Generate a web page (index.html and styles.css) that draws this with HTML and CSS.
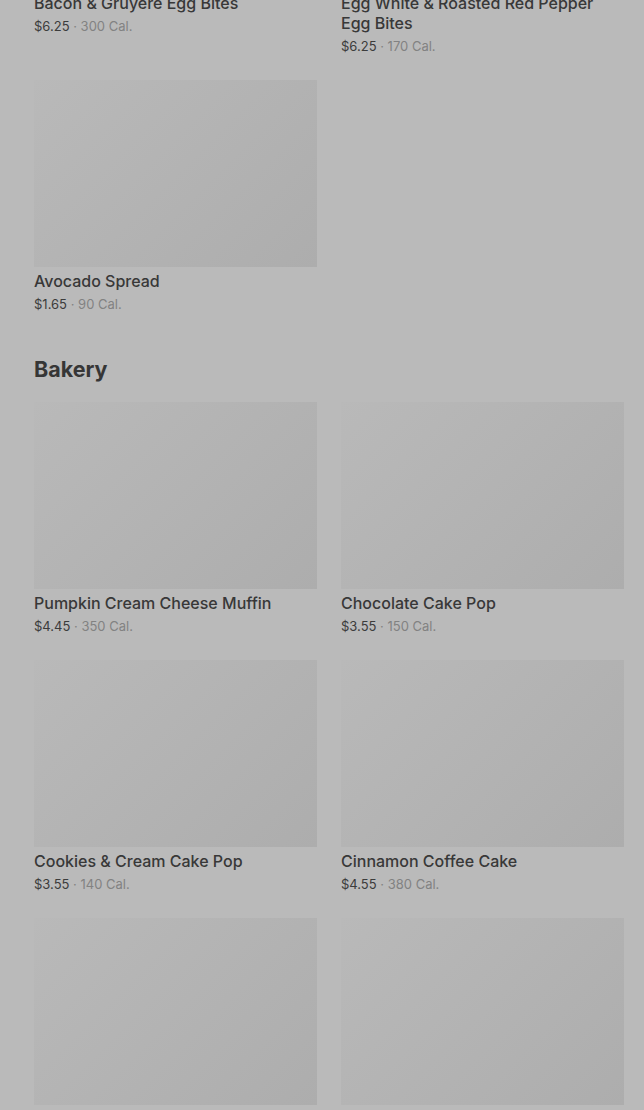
FILE: index.html
```html
<!DOCTYPE html>
<html lang="en">
<head>
  <meta charset="UTF-8">
  <meta name="viewport" content="width=device-width, initial-scale=1">
  <title>Menu</title>
  <link rel="stylesheet" href="styles.css">
</head>
<body>
  <div class="menu">
    <!-- Hot breakfast (scrolled partly out of view) -->
    <section class="category">
      <div class="product-grid">
        <div class="product">
          <div class="product-image"></div>
          <h3 class="product-name">Bacon &amp; Gruyere Egg Bites</h3>
          <p class="product-meta"><span class="price">$6.25</span> · 300 Cal.</p>
        </div>
        <div class="product">
          <div class="product-image"></div>
          <h3 class="product-name">Egg White &amp; Roasted Red Pepper Egg Bites</h3>
          <p class="product-meta"><span class="price">$6.25</span> · 170 Cal.</p>
        </div>
        <div class="product">
          <div class="product-image"></div>
          <h3 class="product-name">Avocado Spread</h3>
          <p class="product-meta"><span class="price">$1.65</span> · 90 Cal.</p>
        </div>
      </div>
    </section>

    <section class="category">
      <h2 class="category-title">Bakery</h2>
      <div class="product-grid">
        <div class="product">
          <div class="product-image"></div>
          <h3 class="product-name">Pumpkin Cream Cheese Muffin</h3>
          <p class="product-meta"><span class="price">$4.45</span> · 350 Cal.</p>
        </div>
        <div class="product">
          <div class="product-image"></div>
          <h3 class="product-name">Chocolate Cake Pop</h3>
          <p class="product-meta"><span class="price">$3.55</span> · 150 Cal.</p>
        </div>
        <div class="product">
          <div class="product-image"></div>
          <h3 class="product-name">Cookies &amp; Cream Cake Pop</h3>
          <p class="product-meta"><span class="price">$3.55</span> · 140 Cal.</p>
        </div>
        <div class="product">
          <div class="product-image"></div>
          <h3 class="product-name">Cinnamon Coffee Cake</h3>
          <p class="product-meta"><span class="price">$4.55</span> · 380 Cal.</p>
        </div>
        <div class="product">
          <div class="product-image"></div>
          <h3 class="product-name">Glazed Doughnut</h3>
          <p class="product-meta"><span class="price">$3.25</span> · 480 Cal.</p>
        </div>
        <div class="product">
          <div class="product-image"></div>
          <h3 class="product-name">Birthday Cake Pop</h3>
          <p class="product-meta"><span class="price">$3.55</span> · 160 Cal.</p>
        </div>
      </div>
    </section>
  </div>
</body>
</html>
```

FILE: styles.css
```css
/* Reset some defaults */
body, h2, h3, p { margin: 0; padding: 0; }

body {
  font-family: Inter, "Noto Sans", sans-serif;
  background: #bababa;
  color: #383838;
  overflow: hidden;
}

/* page is scrolled: first row sits partly above the fold */
.menu {
  margin-top: -198px;
  padding: 0 20px 0 34px;
}

.category + .category {
  margin-top: 41px;
}

.category-title {
  font-size: 21.5px;
  line-height: 28px;
  font-weight: 700;
  color: #363636;
  margin-bottom: 19px;
}

.product-grid {
  display: grid;
  grid-template-columns: 283px 283px;
  column-gap: 24px;
  row-gap: 24px;
  align-items: start;
}

.product-image {
  height: 187px;
  background: linear-gradient(135deg, #b9b9b9, #adadad);
}

.product-name {
  margin-top: 4px;
  font-size: 16px;
  line-height: 20px;
  font-weight: 500;
  color: #383838;
}

.product-meta {
  margin-top: 3px;
  font-size: 13px;
  line-height: 20px;
  color: #828282;
}

.price {
  color: #3c3c3c;
}
```
